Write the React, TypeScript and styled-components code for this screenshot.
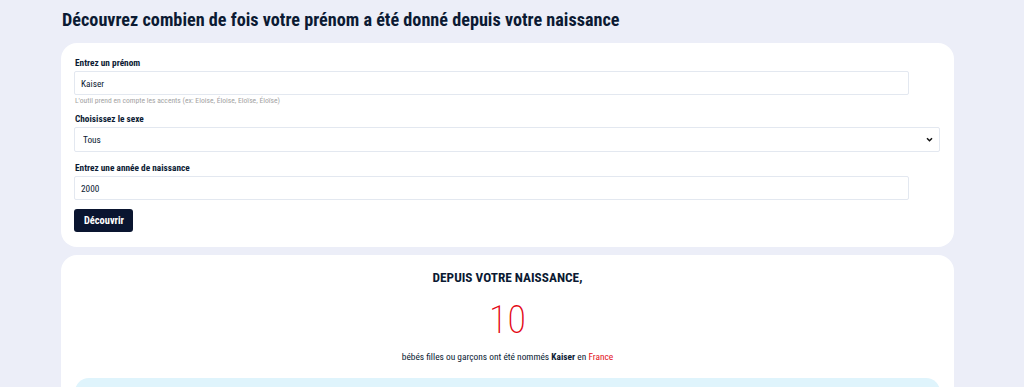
import React, { useState } from "react";
import styled, { createGlobalStyle } from "styled-components";

const GlobalStyle = createGlobalStyle`
  html, body {
    margin: 0;
    padding: 0;
    background: #eceef8;
    font-family: Roboto, "Liberation Sans", sans-serif;
    font-stretch: 80%;
    color: #0b1a33;
  }
  * {
    box-sizing: border-box;
  }
`;

const chevron =
  "data:image/svg+xml;utf8,<svg xmlns='http://www.w3.org/2000/svg' width='8' height='6' viewBox='0 0 8 6'><path d='M1 1.5 L4 4.5 L7 1.5' fill='none' stroke='%23111' stroke-width='1.8'/></svg>";

const Page = styled.div`
  padding: 0 70px 0 61px;
`;

const Title = styled.h1`
  margin: 0;
  padding: 9px 0 0 1px;
  height: 43px;
  font-size: 18.2px;
  font-weight: 700;
  line-height: 22px;
`;

const Card = styled.div`
  background: #ffffff;
  border-radius: 16px;
  padding: 13px 14px 15px;
  margin-bottom: 8px;
`;

const Field = styled.div<{ $tight?: boolean }>`
  display: flex;
  flex-direction: column;
  margin-bottom: ${(p) => (p.$tight ? "6px" : "9px")};
`;

const Label = styled.label`
  font-size: 9.3px;
  font-weight: 700;
  line-height: 13px;
  margin-bottom: 2px;
`;

const Input = styled.input`
  width: 835px;
  height: 24px;
  margin-left: -1px;
  border: 1px solid #e3e8f0;
  border-radius: 2px;
  padding: 0 6px;
  font-family: inherit;
  font-stretch: inherit;
  font-size: 9.3px;
  color: #0b1a33;
  outline: none;
`;

const Select = styled.select`
  appearance: none;
  width: 866px;
  height: 25px;
  margin-left: -1px;
  border: 1px solid #e3e8f0;
  border-radius: 2px;
  padding: 0 8px;
  font-family: inherit;
  font-stretch: inherit;
  font-size: 9.3px;
  color: #0b1a33;
  background: #fff url("${chevron}") no-repeat right 6px center;
  background-size: 7px 5px;
  outline: none;
`;

const Hint = styled.span`
  font-size: 7.6px;
  color: #a3a3a3;
  line-height: 11px;
`;

const Button = styled.button`
  display: block;
  height: 23px;
  padding: 0 9px 0 10px;
  margin-left: -1px;
  border: none;
  border-radius: 3px;
  background: #0a1530;
  color: #fff;
  font-family: inherit;
  font-stretch: inherit;
  font-size: 10.4px;
  font-weight: 700;
`;

const ResultCard = styled(Card)`
  text-align: center;
  padding: 14px 14px 0;
  border-radius: 16px 16px 0 0;
`;

const Heading = styled.h2`
  margin: 0;
  font-size: 13.3px;
  font-weight: 700;
  line-height: 17px;
`;

const Count = styled.div`
  color: #e30613;
  font-size: 38px;
  font-weight: 200;
  line-height: 44px;
  margin-top: 12px;
`;

const Sentence = styled.p`
  margin: 9px 0 0;
  font-size: 9.4px;
  line-height: 12px;
  b {
    font-weight: 700;
  }
`;

const Red = styled.span`
  color: #e3101b;
`;

const InfoBox = styled.div`
  margin-top: 15px;
  background: #dff4fc;
  border-radius: 14px 14px 0 0;
  height: 20px;
`;

export default function App() {
  const [prenom, setPrenom] = useState("Kaiser");
  const [sexe, setSexe] = useState("tous");
  const [annee, setAnnee] = useState("2000");
  return (
    <>
      <GlobalStyle />
      <Page>
        <Title>Découvrez combien de fois votre prénom a été donné depuis votre naissance</Title>
        <Card>
          <Field $tight>
            <Label>Entrez un prénom</Label>
            <Input value={prenom} onChange={(e) => setPrenom(e.target.value)} />
            <Hint>L'outil prend en compte les accents (ex: Eloise, Éloise, Eloïse, Éloïse)</Hint>
          </Field>
          <Field>
            <Label>Choisissez le sexe</Label>
            <Select value={sexe} onChange={(e) => setSexe(e.target.value)}>
              <option value="tous">Tous</option>
              <option value="f">Fille</option>
              <option value="g">Garçon</option>
            </Select>
          </Field>
          <Field>
            <Label>Entrez une année de naissance</Label>
            <Input value={annee} onChange={(e) => setAnnee(e.target.value)} />
          </Field>
          <Button>Découvrir</Button>
        </Card>
        <ResultCard>
          <Heading>DEPUIS VOTRE NAISSANCE,</Heading>
          <Count>10</Count>
          <Sentence>
            bébés filles ou garçons ont été nommés <b>Kaiser</b> en <Red>France</Red>
          </Sentence>
          <InfoBox />
        </ResultCard>
      </Page>
    </>
  );
}
